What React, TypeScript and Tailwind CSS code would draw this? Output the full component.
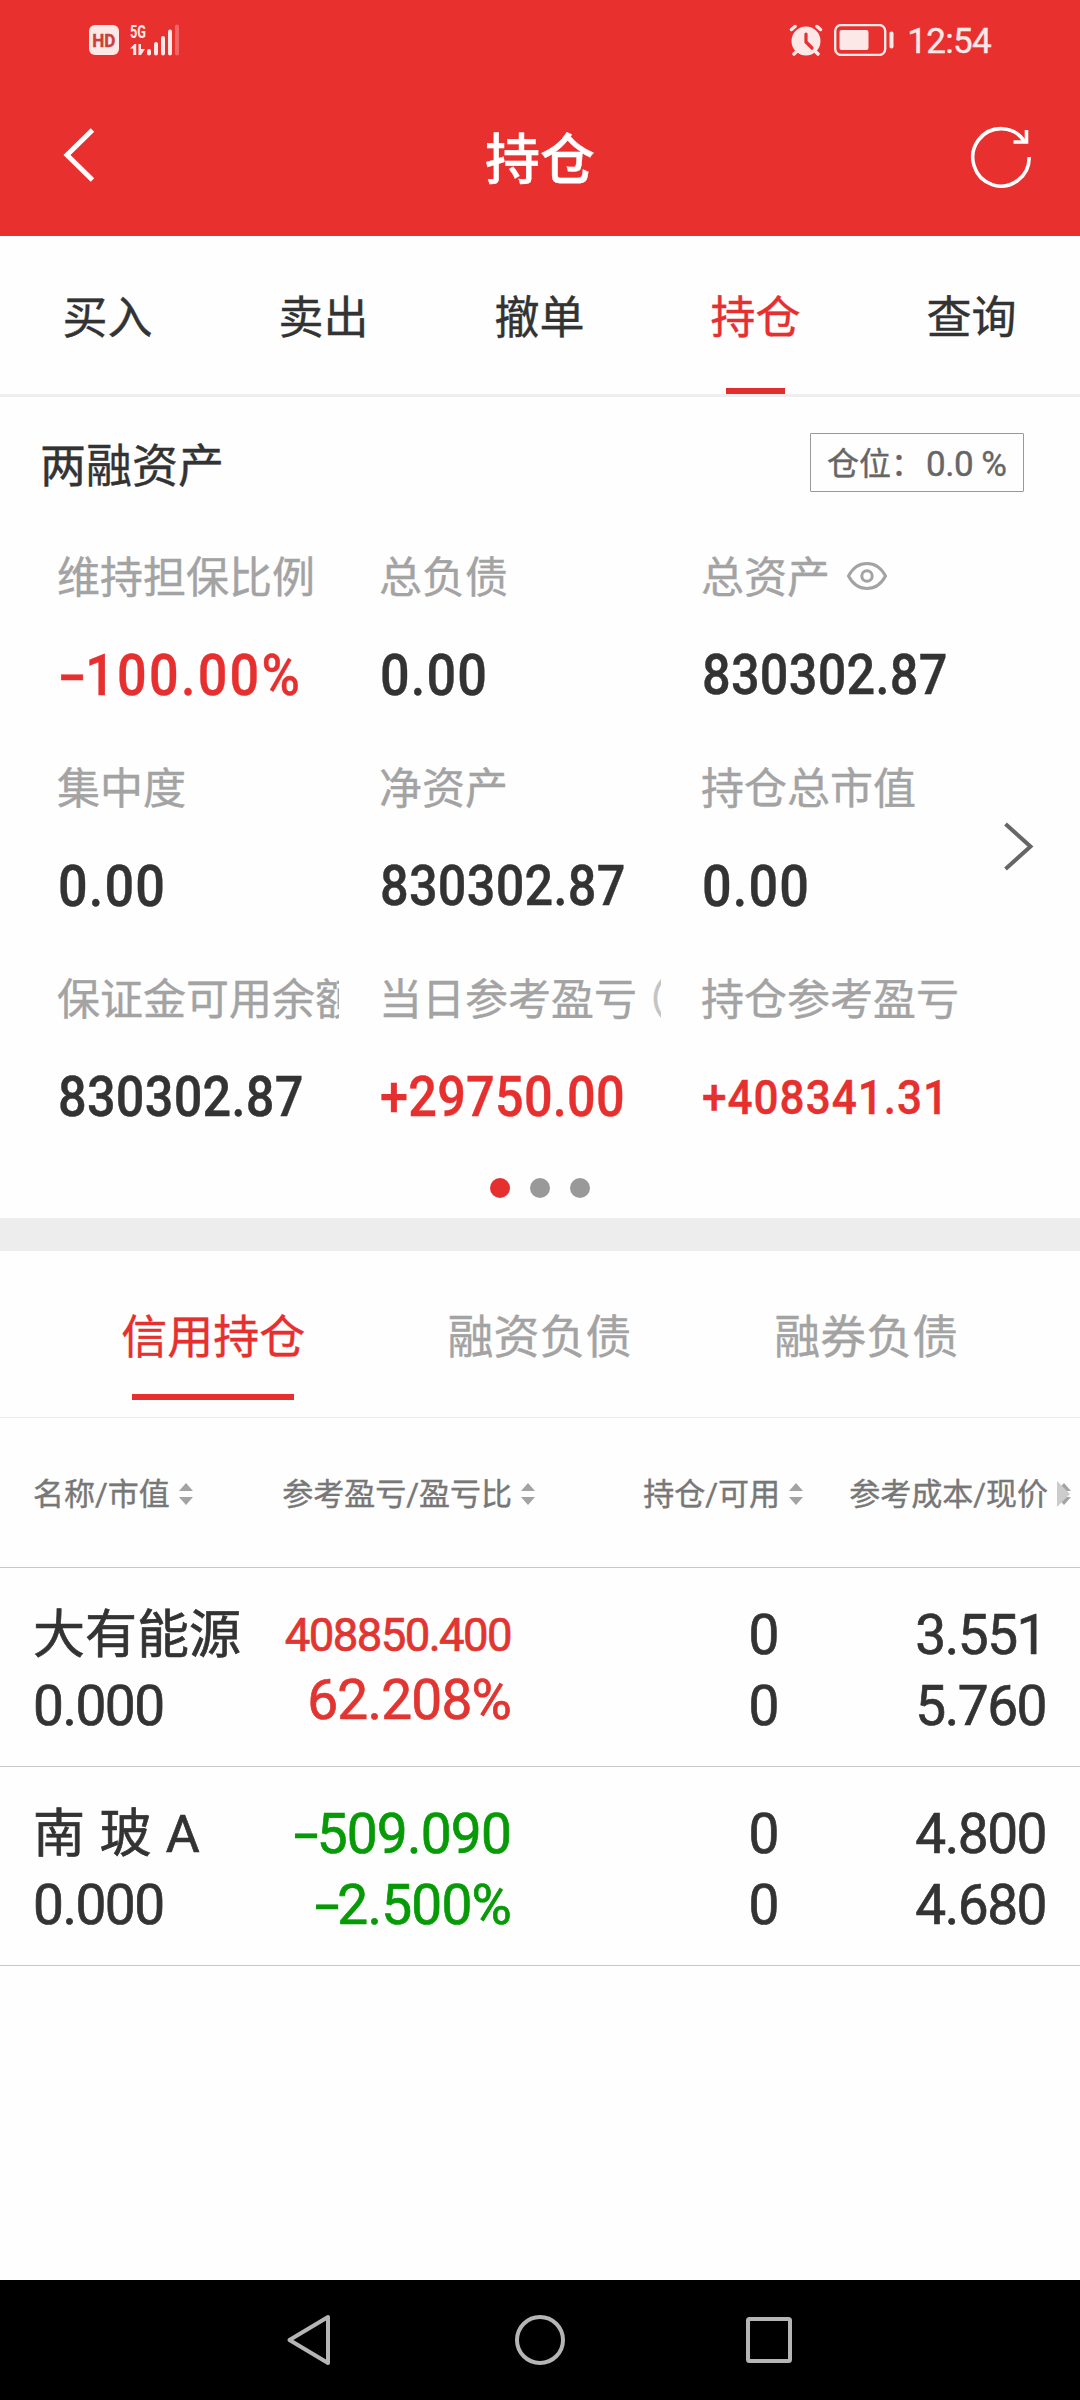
import type { ReactNode } from "react";

interface Metric {
  label: string;
  value: string;
  tone?: string;
  size: string;
  extra?: ReactNode;
}

interface Holding {
  name: string;
  marketValue: string;
  profit: string;
  profitClass: string;
  ratio: string;
  ratioClass: string;
  tone: string;
  position: string;
  available: string;
  cost: string;
  price: string;
}

const EyeIcon = () => (
  <svg className="mb-[3px] ml-[16px] h-[30px] w-[42px] shrink-0" viewBox="0 0 42 30" fill="none" stroke="#a3a3a3" strokeWidth="3">
    <path d="M2.500 14C7 5.500 13.500 1.500 21 1.500S35 5.500 39.500 14C35 22.500 28.500 26.500 21 26.500S7 22.500 2.500 14Z" />
    <circle cx="21" cy="14" r="5.200" />
  </svg>
);

const metrics: Metric[] = [
  { label: "维持担保比例", value: "-100.00%", tone: "text-[#e6302f]", size: "text-[58px] tracking-[2.5px]" },
  { label: "总负债", value: "0.00", size: "text-[58px] tracking-[1.3px]" },
  { label: "总资产", value: "830302.87", size: "text-[56px] tracking-[0.3px]", extra: <EyeIcon /> },
  { label: "集中度", value: "0.00", size: "text-[58px] tracking-[1.3px]" },
  { label: "净资产", value: "830302.87", size: "text-[56px] tracking-[0.3px]" },
  { label: "持仓总市值", value: "0.00", size: "text-[58px] tracking-[1.3px]" },
  { label: "保证金可用余额", value: "830302.87", size: "text-[56px] tracking-[0.3px]" },
  {
    label: "当日参考盈亏",
    value: "+29750.00",
    tone: "text-[#e6302f]",
    size: "text-[56px] tracking-[0.3px]",
    extra: <span className="-ml-[13px] text-[#c4c4c4]">（</span>,
  },
  { label: "持仓参考盈亏", value: "+408341.31", tone: "text-[#e6302f]", size: "text-[49px] tracking-[1.1px]" },
];

const holdings: Holding[] = [
  {
    name: "大有能源",
    marketValue: "0.000",
    profit: "408850.400",
    profitClass: "text-[45.5px] tracking-[-1.6px]",
    ratio: "62.208%",
    ratioClass: "-mt-[6px]",
    tone: "text-[#e13531]",
    position: "0",
    available: "0",
    cost: "3.551",
    price: "5.760",
  },
  {
    name: "南 玻 A",
    marketValue: "0.000",
    profit: "-509.090",
    profitClass: "text-[55px] tracking-[-0.8px]",
    ratio: "-2.500%",
    ratioClass: "",
    tone: "text-[#079a07]",
    position: "0",
    available: "0",
    cost: "4.800",
    price: "4.680",
  },
];

const tabs = ["买入", "卖出", "撤单", "持仓", "查询"];
const subTabs = ["信用持仓", "融资负债", "融券负债"];

// Leading minus is drawn wider than the font's own hyphen
function Amount({ value }: { value: string }) {
  if (!value.startsWith("-")) {
    return <>{value}</>;
  }
  return (
    <>
      <span className="mr-[8px] inline-block origin-left scale-x-160">-</span>
      {value.slice(1)}
    </>
  );
}

function StatusBar() {
  return (
    <div className="flex h-20 items-center justify-between pr-[89px] pl-[89px] text-[#fde8e8]">
      <div className="flex items-center gap-[11px]">
        <span className="flex h-[30px] w-[30px] items-center justify-center rounded-[6px] bg-[#fde8e8] text-[19px] leading-none font-bold text-[#c9403c]">
          <span className="scale-x-90">HD</span>
        </span>
        <svg className="h-8 w-[50px] overflow-visible" viewBox="0 0 50 32" fill="currentColor">
          <text x="0" y="13.500" fontSize="19" fontWeight="700" textLength="16" lengthAdjust="spacingAndGlyphs">5G</text>
          <path d="M0 24.500L4.500 20H6.200V31H3.200V24.500ZM8.500 20H11V25H15L11 31H8.500Z" />
          <rect x="17" y="25" width="4" height="6.500" rx="2" />
          <rect x="24" y="18" width="4" height="13.500" rx="2" />
          <rect x="31" y="12" width="4" height="19.500" rx="2" />
          <rect x="38" y="5.500" width="4" height="26" rx="2" />
          <rect x="45" y="0.500" width="4" height="31" rx="2" opacity="0.300" />
        </svg>
      </div>
      <div className="flex items-center">
        <svg className="mr-[11px] h-8 w-[34px]" viewBox="0 0 34 32" fill="none" stroke="currentColor" strokeLinecap="round">
          <circle cx="17" cy="17" r="14.500" fill="currentColor" stroke="none" />
          <path d="M2.500 5.500L6 2.500M31.500 5.500L28 2.500M5 30L8 27M29 30L26 27" strokeWidth="3.500" />
          <path d="M17 10V18L23 24" stroke="#e6302f" strokeWidth="3.200" />
        </svg>
        <svg className="mr-[13px] h-8 w-[60px]" viewBox="0 0 60 32" fill="none">
          <rect x="1.200" y="1" width="50" height="30" rx="6" stroke="currentColor" strokeWidth="2.400" />
          <rect x="5.500" y="6" width="29" height="20" rx="2" fill="currentColor" />
          <rect x="55.500" y="7.500" width="4" height="17" rx="1.800" fill="currentColor" />
        </svg>
        <span className="pt-[2px] text-[35px] leading-none tracking-[-0.7px]">12:54</span>
      </div>
    </div>
  );
}

function TitleBar() {
  return (
    <div className="flex h-[156px] items-center justify-between pr-[48px] pl-[62px] text-white">
      <svg className="mb-[6px] h-[56px] w-[34px]" viewBox="0 0 34 56" fill="none" stroke="currentColor" strokeWidth="5">
        <path d="M30.500 3L5 28L30.500 53" />
      </svg>
      <h1 className="ml-[14px] pt-[5px] text-[55px] leading-none font-medium">持仓</h1>
      <svg className="mb-[2px] h-[62px] w-[62px]" viewBox="0 0 62 62" fill="none" stroke="currentColor" strokeWidth="3.600">
        <path d="M59.200 31A28.200 28.700 0 1 1 54.500 15.500" />
        <path d="M56.500 4V16H43.500" />
      </svg>
    </div>
  );
}

function MetricCell({ metric }: { metric: Metric }) {
  return (
    <div className="h-[211px] overflow-hidden">
      <div className="flex h-[60px] items-center pt-[3px] text-[43px] whitespace-nowrap text-[#a3a3a3]">
        {metric.label}
        {metric.extra}
      </div>
      <div className="flex h-[134px] items-center pt-[2px] pl-px">
        <span className={`inline-block origin-left scale-x-90 font-medium ${metric.size} ${metric.tone ?? "text-[#333333]"}`}>
          <Amount value={metric.value} />
        </span>
      </div>
    </div>
  );
}

function SortIcon() {
  return (
    <svg className="ml-[9px] h-[22px] w-[14px] shrink-0" viewBox="0 0 14 22" fill="#a3a3a3">
      <path d="M7 0L14 8H0ZM0 14H14L7 22Z" />
    </svg>
  );
}

function TableHead() {
  return (
    <div className="flex h-[150px] items-center border-b border-[#c8c8c8] pt-[3px] text-[31px] whitespace-nowrap text-[#777777]">
      <div className="flex w-[248px] items-center pl-[33px]">
        名称/市值
        <SortIcon />
      </div>
      <div className="flex w-[287px] items-center justify-end">
        参考盈亏/盈亏比
        <SortIcon />
      </div>
      <div className="flex w-[268px] items-center justify-end">
        持仓/可用
        <SortIcon />
      </div>
      <div className="relative flex flex-1 items-center justify-end pr-[9px]">
        参考成本/现价
        <SortIcon />
        {/* more columns hint, lies over the sort arrows */}
        <svg className="absolute top-1/2 right-[10px] h-[26px] w-[13px] -translate-y-1/2" viewBox="0 0 13 26" fill="#cccccc">
          <path d="M0 0L13 13L0 26Z" />
        </svg>
      </div>
    </div>
  );
}

function HoldingRow({ row }: { row: Holding }) {
  return (
    <div className="flex h-[199px] border-b border-[#c8c8c8] pt-[32px] text-[55px] leading-[71px] tracking-[-1.5px] whitespace-nowrap text-[#333333] [-webkit-text-stroke:0.7px]">
      <div className="w-[248px] pl-[33px]">
        <div className="text-[52px] leading-[71px] tracking-normal [word-spacing:1.5px]">{row.name}</div>
        <div>{row.marketValue}</div>
      </div>
      <div className={`w-[263px] text-right ${row.tone}`}>
        <div className={`${row.profitClass} leading-[71px]`}>
          <Amount value={row.profit} />
        </div>
        <div className={`tracking-[-0.8px] ${row.ratioClass}`}>
          <Amount value={row.ratio} />
        </div>
      </div>
      <div className="w-[267px] text-right">
        <div>{row.position}</div>
        <div>{row.available}</div>
      </div>
      <div className="w-[268px] text-right">
        <div>{row.cost}</div>
        <div>{row.price}</div>
      </div>
    </div>
  );
}

export default function App() {
  return (
    <div className="flex h-[2400px] w-[1080px] flex-col overflow-hidden bg-[#fefefe] font-['Roboto','Noto_Sans_CJK_SC',sans-serif] leading-none [-webkit-text-stroke:0.4px]">
      <header className="h-[236px] bg-[#e8302f]">
        <StatusBar />
        <TitleBar />
      </header>

      <nav className="grid h-[161px] grid-cols-5 border-b-[3px] border-[#eeeeee]">
        {tabs.map((tab) => (
          <div
            key={tab}
            className={`relative flex items-center justify-center pt-[7px] pr-px text-[45px] ${tab === "持仓" ? "text-[#e6302f]" : "text-[#333333]"}`}
          >
            {tab}
            {tab === "持仓" && <span className="absolute bottom-0 h-[6px] w-[59px] bg-[#e02e2e]" />}
          </div>
        ))}
      </nav>

      <section className="relative h-[821px]">
        <div className="flex h-[150px] items-start justify-between pt-[36px] pr-[56px] pl-[40px]">
          <h2 className="mt-[10px] text-[46px] text-[#333333]">两融资产</h2>
          <div className="flex h-[59px] w-[214px] items-center rounded-[1px] border border-[#999999] pt-[3px] pl-[16px] text-[32px] text-[#666666]">
            仓位：<span className="ml-[3px] text-[35px] tracking-[-0.5px]">0.0 %</span>
          </div>
        </div>
        <div className="grid grid-cols-[282px_282px_282px] gap-x-10 pl-[57px]">
          {metrics.map((metric) => (
            <MetricCell key={metric.label} metric={metric} />
          ))}
        </div>
        <svg className="absolute top-[424px] right-[46px] h-[50px] w-[32px]" viewBox="0 0 32 50" fill="none" stroke="#666666" strokeWidth="4">
          <path d="M3.500 3L28.500 25.500L3.500 48" />
        </svg>
        <div className="-mt-[2px] flex justify-center gap-5">
          <span className="h-5 w-5 rounded-full bg-[#e6302f]" />
          <span className="h-5 w-5 rounded-full bg-[#999999]" />
          <span className="h-5 w-5 rounded-full bg-[#999999]" />
        </div>
      </section>

      <div className="h-[33px] bg-[#ededed]" />

      <nav className="grid h-[167px] grid-cols-3 border-b border-[#ebebeb] px-[50px]">
        {subTabs.map((tab, i) => (
          <div key={tab} className={`relative flex justify-center pt-[63px] text-[46px] ${i === 0 ? "text-[#e6302f]" : "pr-px text-[#a3a3a3]"}`}>
            {tab}
            {i === 0 && <span className="absolute top-[143px] h-[6px] w-[162px] bg-[#e6302f]" />}
          </div>
        ))}
      </nav>

      <main className="flex-1">
        <TableHead />
        {holdings.map((row) => (
          <HoldingRow key={row.name} row={row} />
        ))}
      </main>

      <footer className="flex h-[120px] items-center justify-center gap-[179px] bg-black">
        <svg className="h-[52px] w-[50px]" viewBox="0 0 50 52" fill="none" stroke="#b5b5b5" strokeWidth="4" strokeLinejoin="round">
          <path d="M43 3V49L4.500 26Z" />
        </svg>
        <svg className="h-[52px] w-[52px]" viewBox="0 0 52 52" fill="none" stroke="#b5b5b5" strokeWidth="4">
          <circle cx="26" cy="26" r="23" />
        </svg>
        <svg className="h-[52px] w-[50px]" viewBox="0 0 50 52" fill="none" stroke="#b5b5b5" strokeWidth="4">
          <rect x="3" y="5" width="42" height="42" rx="1.500" />
        </svg>
      </footer>
    </div>
  );
}
